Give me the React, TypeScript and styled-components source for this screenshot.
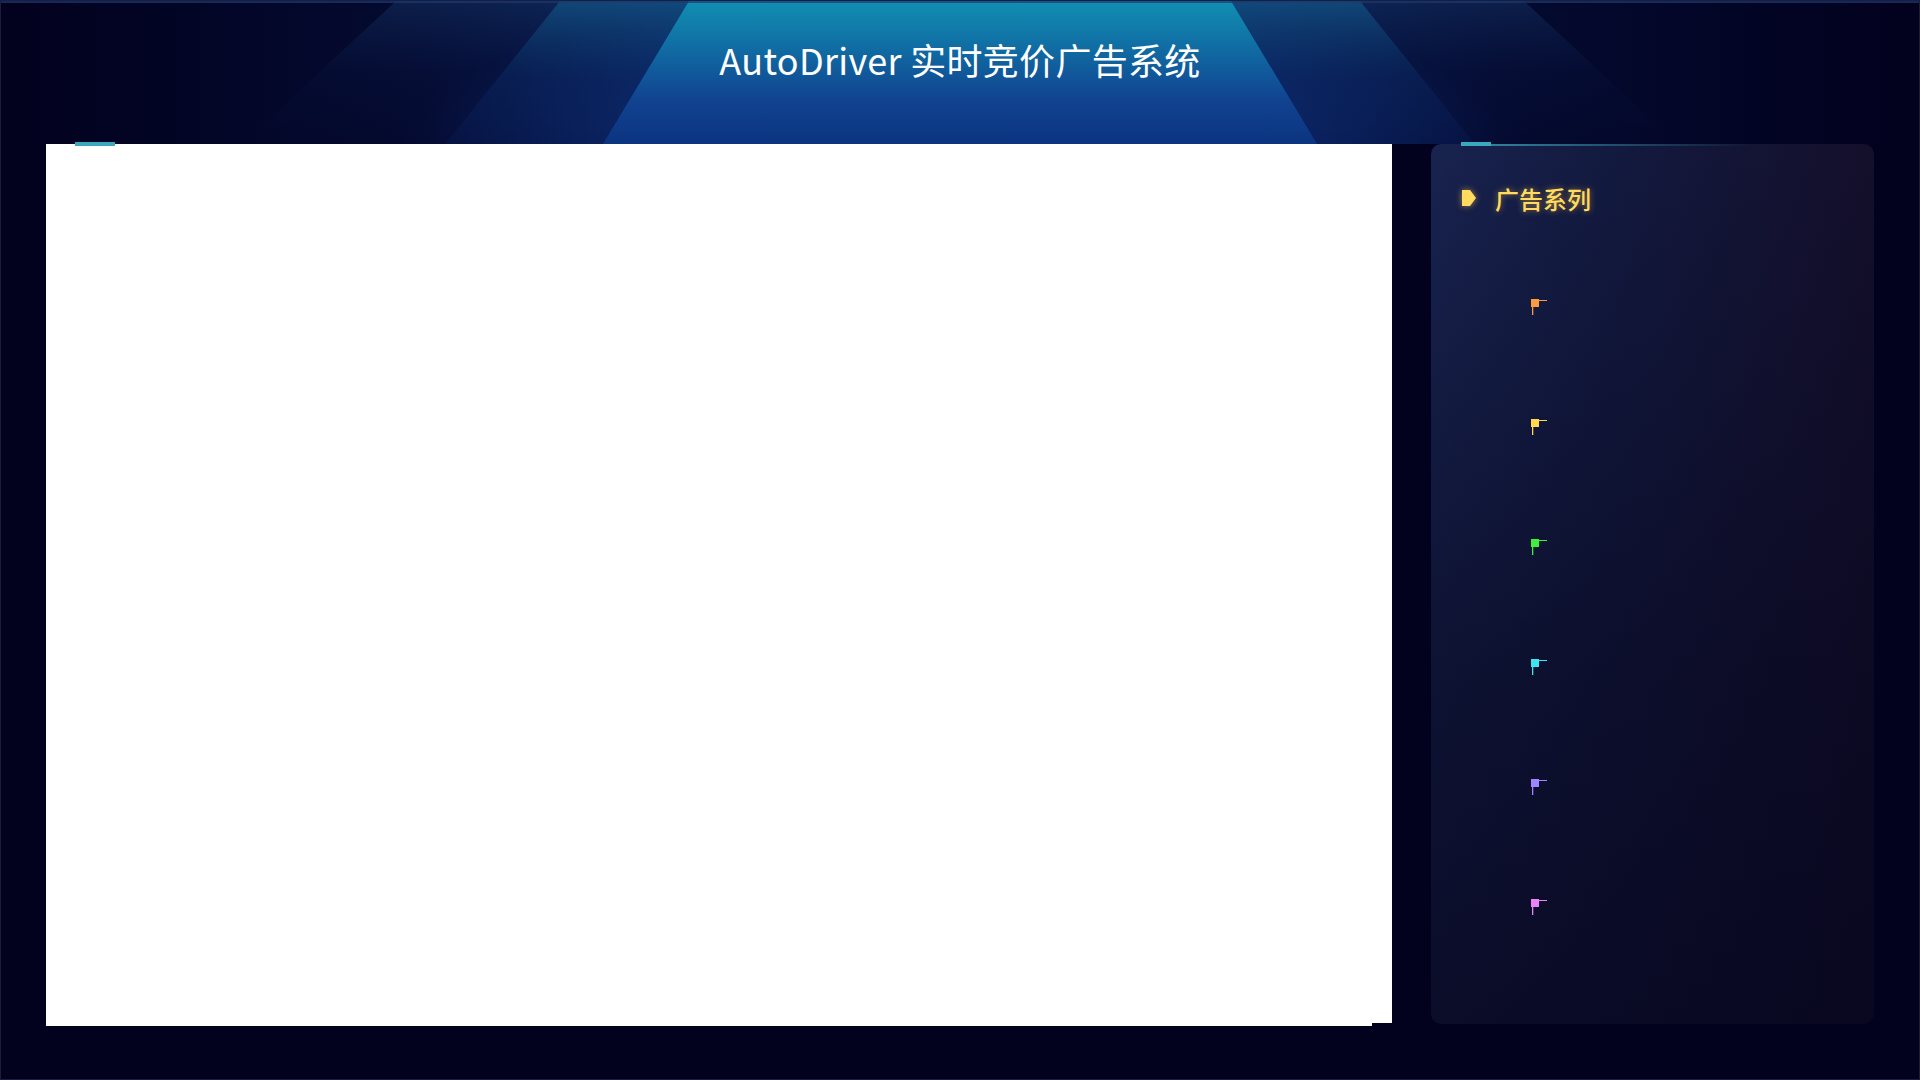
import React from "react";
import styled, { createGlobalStyle } from "styled-components";

const GlobalStyle = createGlobalStyle`
  html, body {
    margin: 0;
    padding: 0;
    background: #02011e;
  }
  * {
    box-sizing: border-box;
  }
`;

const colors = {
  page: "#02011e",
  frame: "#1a1d3e",
  teal: "#3aa9bd",
  gold: "#ffdc60",
};

const flagColors = ["#ff9a3c", "#ffd84d", "#3ff03a", "#3ce6ef", "#9d86ff", "#e884f5"];

const StyledScreen = styled.div`
  width: 1920px;
  height: 1080px;
  border: 1px solid ${colors.frame};
  background: ${colors.page};
  display: flex;
  flex-direction: column;
  overflow: hidden;
  font-family: "Noto Sans CJK SC", "Noto Sans", sans-serif;
`;

const StyledHeader = styled.div`
  position: relative;
  height: 143px;
  flex-shrink: 0;
  display: flex;
  justify-content: center;
  background:
    radial-gradient(ellipse 560px 150px at 50% 100%, rgba(20, 66, 155, 0.7), rgba(20, 66, 155, 0) 100%),
    linear-gradient(
      to right,
      #02011e 0%,
      #040a30 22%,
      #071a52 42%,
      #071a52 58%,
      #040a30 78%,
      #02011e 100%
    );
`;

const StyledBeams = styled.svg`
  position: absolute;
  left: 0;
  top: 0;
  width: 1918px;
  height: 143px;
`;

const StyledTitle = styled.h1`
  position: relative;
  margin: 0;
  padding-top: 32px;
  font-size: 36px;
  line-height: 52px;
  font-weight: 400;
  letter-spacing: 0.3px;
  color: #ffffff;
`;

const StyledBody = styled.div`
  display: flex;
  align-items: flex-start;
  gap: 39px;
  padding: 0 45px;
`;

const StyledMain = styled.div`
  position: relative;
  width: 1346px;
  display: flex;
  flex-direction: column;
`;

const StyledStage = styled.div`
  height: 879px;
  background: #ffffff;
`;

const StyledStageTail = styled.div`
  height: 3px;
  margin-right: 20px;
  background: #ffffff;
`;

const StyledAccent = styled.div<{ $left: number; $width: number }>`
  position: absolute;
  top: -2px;
  left: ${(p) => p.$left}px;
  width: ${(p) => p.$width}px;
  height: 4px;
  background: ${colors.teal};
`;

const StyledSide = styled.div`
  position: relative;
  width: 443px;
  height: 880px;
  border-radius: 10px;
  padding: 42px 30px 0 30px;
  background:
    linear-gradient(to bottom, rgba(2, 1, 30, 0) 0%, rgba(6, 5, 28, 0.55) 60%, rgba(6, 5, 28, 0.75) 100%),
    linear-gradient(to right, #18234f 0%, #131a40 40%, #140f2b 100%);
`;

const StyledSideLine = styled.div`
  position: absolute;
  top: 0;
  left: 60px;
  width: 260px;
  height: 2px;
  background: linear-gradient(to right, rgba(58, 169, 189, 0.7), rgba(58, 169, 189, 0));
`;

const StyledSideTitle = styled.div`
  display: flex;
  align-items: center;
  gap: 18px;
  height: 24px;
  font-size: 24px;
  font-weight: 500;
  color: ${colors.gold};
  text-shadow: 0 0 6px rgba(255, 200, 60, 0.55);
`;

const StyledMarker = styled.svg`
  width: 16px;
  height: 18px;
  filter: drop-shadow(0 0 3px rgba(255, 200, 60, 0.6));
`;

const StyledLegend = styled.div`
  display: flex;
  flex-direction: column;
  gap: 104px;
  margin-top: 89px;
  padding-left: 70px;
`;

const StyledFlag = styled.svg`
  display: block;
  width: 17px;
  height: 16px;
`;

const Flag: React.FC<{ color: string }> = ({ color }) => (
  <StyledFlag viewBox="0 0 17 16">
    <rect x="0" y="0" width="8" height="8" fill={color} />
    <rect x="1" y="0" width="1.3" height="16" fill={color} />
    <rect x="8" y="1" width="8" height="1" fill={color} />
  </StyledFlag>
);

const HeaderBeams: React.FC = () => (
  <StyledBeams viewBox="0 0 1918 143" preserveAspectRatio="none">
    <defs>
      <linearGradient id="beamOuter" x1="0" y1="0" x2="0" y2="1">
        <stop offset="0%" stopColor="#2a6aa8" stopOpacity="0.22" />
        <stop offset="50%" stopColor="#1a4a90" stopOpacity="0.06" />
        <stop offset="100%" stopColor="#1a4a90" stopOpacity="0" />
      </linearGradient>
      <linearGradient id="beamMid" x1="0" y1="0" x2="0" y2="1">
        <stop offset="0%" stopColor="#1479a8" stopOpacity="0.42" />
        <stop offset="55%" stopColor="#103f88" stopOpacity="0.22" />
        <stop offset="100%" stopColor="#0c3482" stopOpacity="0.12" />
      </linearGradient>
      <linearGradient id="beamCore" x1="0" y1="0" x2="0" y2="1">
        <stop offset="0%" stopColor="#118fb2" />
        <stop offset="35%" stopColor="#106aa2" />
        <stop offset="70%" stopColor="#114290" />
        <stop offset="100%" stopColor="#0b3480" />
      </linearGradient>
    </defs>
    <polygon points="395,0 1523,0 1677,143 241,143" fill="url(#beamOuter)" />
    <polygon points="559,0 1359,0 1474,143 444,143" fill="url(#beamMid)" />
    <polygon points="688,0 1230,0 1316,143 602,143" fill="url(#beamCore)" />
    <rect x="0" y="0" width="1918" height="2" fill="#1b3a72" opacity="0.7" />
  </StyledBeams>
);

const App: React.FC = () => {
  return (
    <>
      <GlobalStyle />
      <StyledScreen>
        <StyledHeader>
          <HeaderBeams />
          <StyledTitle>AutoDriver 实时竞价广告系统</StyledTitle>
        </StyledHeader>
        <StyledBody>
          <StyledMain>
            <StyledAccent $left={29} $width={40} />
            <StyledStage />
            <StyledStageTail />
          </StyledMain>
          <StyledSide>
            <StyledSideLine />
            <StyledAccent $left={30} $width={30} />
            <StyledSideTitle>
              <StyledMarker viewBox="0 0 16 18">
                <path d="M1 1 H9 L15 9 L9 17 H1 Z" fill={colors.gold} />
              </StyledMarker>
              广告系列
            </StyledSideTitle>
            <StyledLegend>
              {flagColors.map((c) => (
                <Flag key={c} color={c} />
              ))}
            </StyledLegend>
          </StyledSide>
        </StyledBody>
      </StyledScreen>
    </>
  );
};

export default App;
